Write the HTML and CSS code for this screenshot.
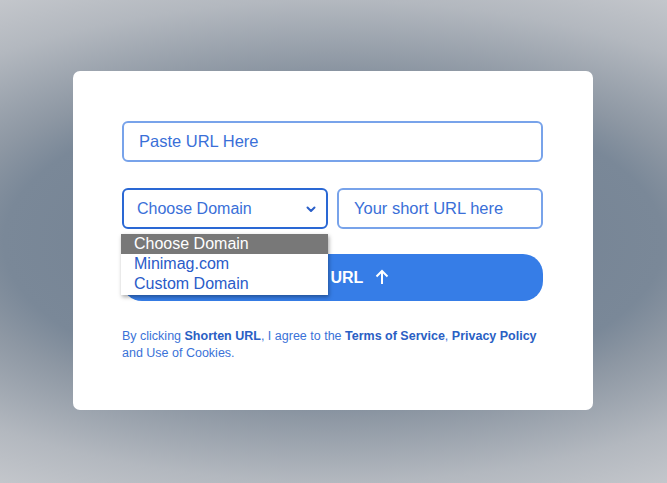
FILE: index.html
```html
<!DOCTYPE html>
<html>
<head>
<meta charset="utf-8">
<link rel="stylesheet" href="styles.css">
</head>
<body>
<div class="stage">
  <div class="card">
    <div class="field url">Paste URL Here</div>
    <div class="row">
      <div class="select-wrap">
        <div class="field select">
          <span>Choose Domain</span>
          <svg class="chev" width="10" height="7" viewBox="0 0 10 7"><path d="M1.5 1.5 L5 5 L8.5 1.5" fill="none" stroke="#2a5fc8" stroke-width="2" stroke-linecap="round" stroke-linejoin="round"/></svg>
        </div>
        <div class="menu">
          <div class="opt sel">Choose Domain</div>
          <div class="opt">Minimag.com</div>
          <div class="opt">Custom Domain</div>
        </div>
      </div>
      <div class="field short">Your short URL here</div>
    </div>
    <div class="btn">
      <span>Shorten URL</span>
      <svg width="14" height="16" viewBox="0 0 14 16"><path d="M7 15 V2 M1.5 7.5 L7 2 L12.5 7.5" fill="none" stroke="#fff" stroke-width="2"/></svg>
    </div>
    <p class="terms">By clicking <b>Shorten URL</b>, I agree to the <b>Terms of Service</b>, <b>Privacy Policy</b><br>and Use of Cookies.</p>
  </div>
</div>
</body>
</html>
```
FILE: styles.css
```css
* { box-sizing: border-box; }
html, body { margin: 0; height: 100%; }
body {
  font-family: "Liberation Sans", Arial, sans-serif;
  background: radial-gradient(ellipse 600px 270px at 50% 50%, #6f7e90 0%, #7a8898 55%, #8d97a3 65%, #b3b8bf 89%, #c3c6cb 105%);
}
.stage {
  height: 100%;
  display: flex;
  align-items: center;
  justify-content: center;
  padding: 0 1px 2px 0;
}
.card {
  width: 520px;
  height: 339px;
  background: #fff;
  border-radius: 7px;
  padding: 50px 50px 0 49px;
  display: flex;
  flex-direction: column;
}
.field {
  height: 41px;
  border: 2px solid #78a3ea;
  border-radius: 6px;
  color: #3a6fd8;
  font-size: 16.5px;
  display: flex;
  align-items: center;
  padding-left: 15px;
}
.row {
  display: flex;
  gap: 9px;
  margin-top: 26px;
}
.select-wrap {
  position: relative;
  width: 206px;
}
.select {
  border-color: #2a68d4;
  padding-left: 13px;
  padding-right: 10px;
  justify-content: space-between;
  font-size: 16px;
}
.chev { margin-top: 1px; }
.short {
  width: 206px;
  padding-left: 15px;
}
.menu {
  position: absolute;
  left: -1px;
  top: 46px;
  width: 207px;
  background: #fff;
  box-shadow: 1px 2px 4px rgba(0,0,0,0.35);
  padding-bottom: 1px;
  z-index: 2;
}
.opt {
  height: 20px;
  line-height: 20px;
  font-size: 16px;
  color: #2a5bc8;
  padding-left: 13px;
}
.opt.sel {
  background: #787878;
  color: #fff;
}
.btn {
  margin-top: 25px;
  height: 47px;
  background: #367de7;
  border-radius: 20px;
  color: #fff;
  font-size: 16px;
  font-weight: bold;
  display: flex;
  align-items: center;
  justify-content: center;
  gap: 12px;
  padding-right: 10px;
}
.btn svg { margin-top: -1px; }
.terms {
  margin: 27px 0 0;
  font-size: 12.5px;
  line-height: 17px;
  color: #3a72d8;
}
.terms b { color: #2a60c4; }
```
